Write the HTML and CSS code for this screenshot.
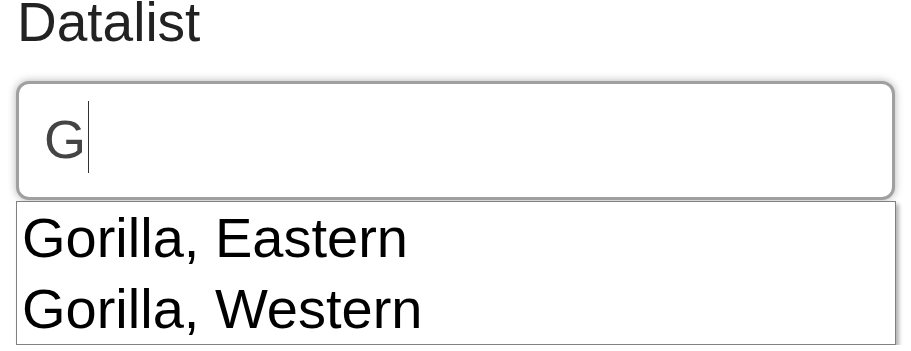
FILE: index.html
```html
<!DOCTYPE html>
<html>
<head>
<meta charset="utf-8">
<link rel="stylesheet" href="styles.css">
</head>
<body>
<div class="page">
  <label class="label">Datalist</label>
  <div class="field">
    <span class="value">G</span><span class="caret"></span>
  </div>
  <ul class="list">
    <li class="option">Gorilla, Eastern</li>
    <li class="option">Gorilla, Western</li>
  </ul>
</div>
</body>
</html>
```
FILE: styles.css
```css
html, body {
  margin: 0;
  padding: 0;
  background: #fff;
}
.page {
  padding-left: 16px;
  width: 880px;
  font-family: "Liberation Sans", Arial, sans-serif;
  display: flex;
  flex-direction: column;
}
.label {
  display: block;
  font-size: 55px;
  line-height: 44px;
  color: #222;
  padding-left: 1px;
  margin-bottom: 37px;
}
.field {
  box-sizing: border-box;
  width: 879px;
  height: 119px;
  border: 3px solid #a0a0a0;
  border-radius: 13px;
  box-shadow: 0 0 9px rgba(0, 0, 0, 0.3);
  padding-left: 25px;
  display: flex;
  align-items: center;
  font-size: 54px;
  color: #444;
  background: #fff;
}
.value {
  line-height: 62px;
  padding-bottom: 4px;
}
.caret {
  display: block;
  width: 1px;
  height: 72px;
  background: #333;
  margin-left: 2px;
  margin-top: -8px;
}
.list {
  list-style: none;
  margin: 1px 0 0 0;
  padding: 0 0 0 5px;
  width: 880px;
  box-sizing: border-box;
  border: 1px solid #808080;
  box-shadow: 3px 3px 4px rgba(0, 0, 0, 0.3);
  background: #fff;
}
.option {
  font-size: 56px;
  line-height: 71px;
  height: 71px;
  color: #000;
}
```
